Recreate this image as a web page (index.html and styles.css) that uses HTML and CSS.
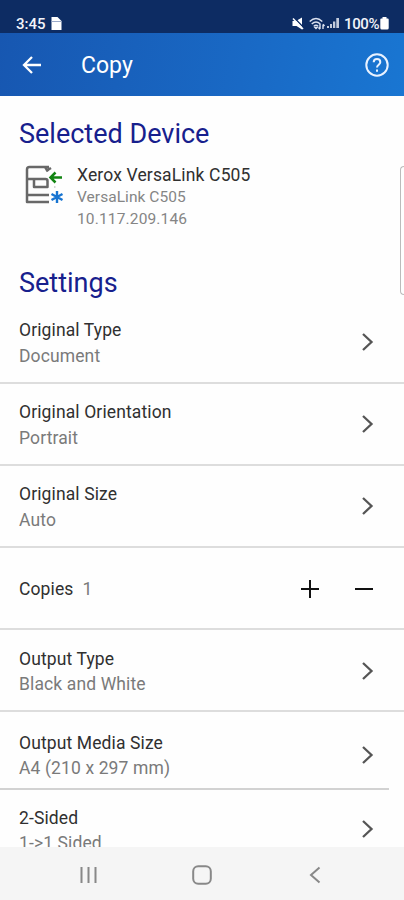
FILE: index.html
```html
<!DOCTYPE html>
<html lang="en">
<head>
<meta charset="utf-8">
<title>Copy</title>
<link rel="stylesheet" href="styles.css">
</head>
<body>
<div class="screen">
  <header class="status">
    <span class="time">3:45</span>
    <svg class="file" width="11" height="14" viewBox="0 0 11 14"><path d="M1 0h5.500L10.500 4v9H.5V.5z" fill="#fff"/><path d="M.5 4.500h10" stroke="#9aa9c8"/></svg>
    <svg class="mute" width="12" height="13" viewBox="0 0 12 13"><path d="M.5 4h3.500l6-3.500v12L4.500 9H.5z" fill="#fff"/><path d="M2 .5l10 10.500" stroke="#0d2c63" stroke-width="1.500"/><path d="M1 1.500l10 10.500" stroke="#fff" stroke-width="1.500"/></svg>
    <svg class="wifi" width="17" height="14" viewBox="0 0 17 14" fill="none" stroke="#dce2f0" stroke-width="1.400"><path d="M.7 4.500q6.300-6 12.600 0M2.700 7q4.300-4 8.600 0M4.800 9.300q2.200-2 4.400 0"/><path d="M7 11.500l-1-1h2z" fill="#dce2f0"/><path d="M11 7v5M9.500 10.500l1.500 1.800M14 12V7.500M15.500 9L14 7.300"/></svg>
    <svg class="signal" width="13" height="12" viewBox="0 0 13 12" fill="#c3cbdc"><path d="M0 9h2v2H0zM3 7h2v4H3zM6 4.500h2.300V11H6zM9.300 1h2.700v10H9.300z"/></svg>
    <span class="percent">100%</span>
    <svg class="battery" width="9" height="13" viewBox="0 0 9 13"><path d="M2.500 0h4v1.500h1.200q1 0 1 1V11q0 1.500-1.500 1.500H1.800Q.3 12.500.3 11V2.500q0-1 1-1h1.200z" fill="#fff"/></svg>
  </header>
  <nav class="appbar">
    <svg class="back" width="20" height="20" viewBox="0 0 20 20" fill="none" stroke="#fff" stroke-width="2.300"><path d="M19 10H2.500M10 2L2 10l8 8"/></svg>
    <h1>Copy</h1>
    <svg class="help" width="24" height="24" viewBox="0 0 24 24" fill="none" stroke="#e9f2ff" stroke-width="2"><circle cx="12" cy="12" r="10.700"/><path d="M8.700 9.300Q8.700 6 12 6t3.300 3.200c0 2.300-3.300 2.800-3.300 5.300M12 16.500v2.200"/></svg>
  </nav>
  <main>
    <h2 class="selected">Selected Device</h2>
    <section class="device">
      <svg class="printer" width="40" height="42" viewBox="0 0 40 42" fill="none">
        <g stroke="#686868" stroke-width="2.500" stroke-linejoin="round"><path d="M25 3H5.500Q3 3 3 5.500V38h22M21 3l3 4.500M22 7l5-3M3 15h18.500q2 0 2 2v6H10v-7.500M3 31h22"/></g>
        <path d="M38 13.500H27M31.500 8.500l-5 5 5 5" stroke="#128412" stroke-width="2.500"/>
        <path d="M33 27v12M27.500 30l11 6M38.500 30l-11 6" stroke="#1774d1" stroke-width="2.400"/>
        <path d="M30 23h1.500" stroke="#aaa"/>
      </svg>
      <div class="info">
        <div class="name">Xerox VersaLink C505</div>
        <div class="detail"><span class="model">VersaLink C505</span></div>
        <div class="detail"><span class="ip">10.117.209.146</span></div>
      </div>
      <div class="edge"></div>
    </section>
    <h2 class="settings">Settings</h2>
    <div class="row"><div><div class="label">Original Type</div><div class="value">Document</div></div><svg class="chev" width="14" height="20" viewBox="0 0 14 20"><path d="M2 2l8.500 8L2 18"/></svg></div>
    <div class="row"><div><div class="label">Original Orientation</div><div class="value">Portrait</div></div><svg class="chev" width="14" height="20" viewBox="0 0 14 20"><path d="M2 2l8.500 8L2 18"/></svg></div>
    <div class="row"><div><div class="label">Original Size</div><div class="value">Auto</div></div><svg class="chev" width="14" height="20" viewBox="0 0 14 20"><path d="M2 2l8.500 8L2 18"/></svg></div>
    <div class="row copies"><div class="label">Copies</div><div class="value">1</div>
      <svg class="plus" width="20" height="20" viewBox="0 0 20 20"><path d="M1 10h18M10 1v18"/></svg>
      <svg class="minus" width="20" height="20" viewBox="0 0 20 20"><path d="M1 10h18"/></svg></div>
    <div class="row output"><div><div class="label">Output Type</div><div class="value">Black and White</div></div><svg class="chev" width="14" height="20" viewBox="0 0 14 20"><path d="M2 2l8.500 8L2 18"/></svg></div>
    <div class="row media"><div><div class="label">Output Media Size</div><div class="value">A4 (210 x 297 mm)</div></div><svg class="chev" width="14" height="20" viewBox="0 0 14 20"><path d="M2 2l8.500 8L2 18"/></svg></div>
    <div class="row sided"><div><div class="label">2-Sided</div><div class="value">1-&gt;1 Sided</div></div><svg class="chev" width="14" height="20" viewBox="0 0 14 20"><path d="M2 2l8.500 8L2 18"/></svg></div>
  </main>
  <footer>
    <svg width="18" height="18" viewBox="0 0 18 18"><path d="M1.500 1v16M8.500 1v16M15.500 1v16"/></svg>
    <svg width="20" height="20" viewBox="0 0 20 20"><rect x="1.200" y="1.200" width="17.600" height="17.600" rx="5"/></svg>
    <svg width="18" height="18" viewBox="0 0 18 18"><path d="M13.500 1.500L5 9l8.500 7.500"/></svg>
  </footer>
</div>
</body>
</html>
```
FILE: styles.css
```css
* { box-sizing: border-box; }
body { margin: 0; background: #fff; font-family: Roboto, sans-serif; }
svg { display: block; flex: none; }
h1, h2 { margin: 0; font-weight: 400; white-space: nowrap; }
.screen { width: 404px; height: 900px; display: flex; flex-direction: column; overflow: hidden; background: #fefefe; }
.status { height: 33px; flex: none; background: #0d2c63; color: #f2f4fa; display: flex; padding: 0 15px 0 16px; font-weight: 500; line-height: 18px; }
.status > * { margin-top: 17px; }
.status .time { font-size: 15px; width: 29px; margin-top: 15px; white-space: nowrap; }
.status .file { margin-left: 6px; }
.status .mute { margin-left: auto; }
.wifi { margin-left: 5px; }
.signal { margin-left: 1px; }
.status .percent { font-size: 15px; width: 36px; margin: 15px 0 0 4px; letter-spacing: -0.4px; }
.battery { margin-left: 0; }
.appbar { height: 63px; flex: none; display: flex; align-items: center; padding: 0 15px 0 22px; color: #fff; background: linear-gradient(100deg, #1757b1, #1969c5 60%, #1976d2); }
.appbar h1 { font-size: 23px; line-height: 32px; margin: 3px 0 0 39px; }
.help { margin-left: auto; }
main { height: 751px; flex: none; overflow: hidden; display: flex; flex-direction: column; }
h2 { color: #17208d; font-size: 27px; line-height: 32px; padding-left: 19px; flex: none; }
.selected { margin-top: 22px; }
.device { flex: none; height: 145px; margin-top: 10px; display: flex; padding-left: 24px; }
.printer { margin-top: 4px; }
.info { margin-left: 13px; padding-top: 4px; color: #858585; }
.name { color: #303030; font-size: 17.5px; line-height: 23px; letter-spacing: .15px; white-space: nowrap; }
.detail { font-size: 15.5px; line-height: 21.5px; letter-spacing: .05px; white-space: nowrap; }
.ip { letter-spacing: .15px; }
.edge { width: 4px; height: 129px; margin: 6px 0 0 auto; border: 1px solid #bbb; border-right: 0; border-radius: 5px 0 0 5px; }
.settings { margin-top: -38px; height: 35px; }
.row { flex: none; height: 82px; border-bottom: 2px solid #ddd; display: flex; padding: 15px 29px 0 19px; }
.label { color: #303030; font-size: 17.5px; line-height: 26px; letter-spacing: .12px; white-space: nowrap; }
.value { color: #7a7a7a; font-size: 17.5px; line-height: 26px; letter-spacing: .12px; white-space: nowrap; }
.chev { margin: 15px 0 0 auto; fill: none; stroke: #555; stroke-width: 2.3; }
.copies { padding: 1px 30px 0 19px; align-items: center; }
.copies .value { margin-left: 9px; }
.copies svg { fill: none; stroke: #111; stroke-width: 2; }
.plus { margin-left: auto; }
.minus { margin-left: 34px; }
.output { padding-top: 16px; }
.output .value, .media .value, .sided .value { line-height: 25px; }
.media { height: 78px; padding-top: 18px; border: 0; background: linear-gradient(#d2d2d2, #d2d2d2) left bottom / 389px 2px no-repeat; }
.sided .chev { margin-top: 14px; }
footer { height: 53px; flex: none; background: #f5f5f5; display: flex; align-items: center; gap: 94px; padding: 2px 0 0 80px; }
footer svg { fill: none; stroke: #888; stroke-width: 2; }
```
